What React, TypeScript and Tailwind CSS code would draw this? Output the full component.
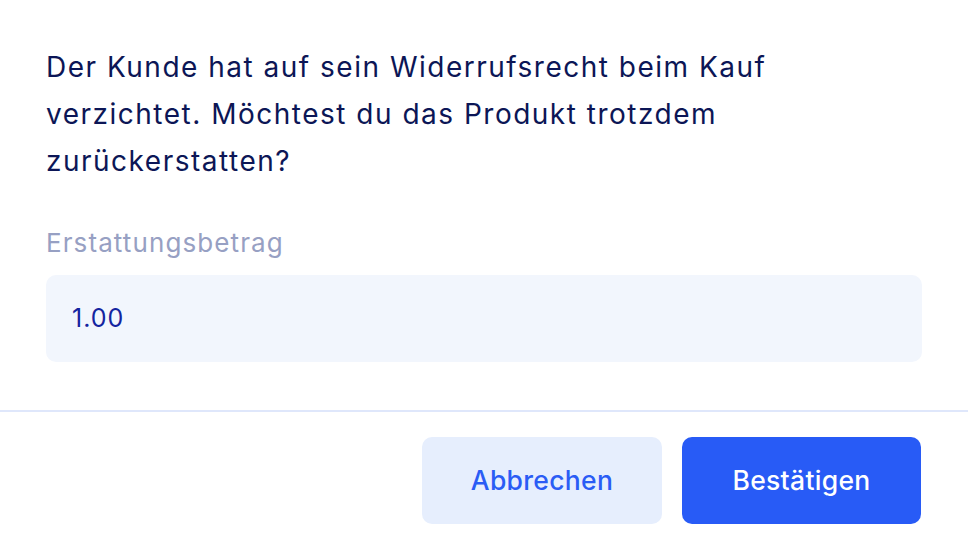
import React from 'react';

export default function App() {
  return (
    <div className="w-[968px] h-[538px] bg-white overflow-hidden" style={{ fontFamily: 'Inter, "Noto Sans", sans-serif' }}>
      {/* Body */}
      <div className="px-[46px] pt-[44px]">
        <p className="text-[28px] leading-[47px] text-[#0c1656] tracking-[1.5px]">
          Der Kunde hat auf sein Widerrufsrecht beim Kauf
          <br />
          verzichtet. Möchtest du das Produkt trotzdem
          <br />
          zurückerstatten?
        </p>

        <label className="block mt-[42px] text-[26px] leading-[32px] text-[#97a0c3] tracking-[1.1px]">Erstattungsbetrag</label>
        <div className="mt-[16px] h-[87px] rounded-[10px] bg-[#f2f6fd] flex items-center px-[26px]">
          <span className="text-[25px] text-[#1424a0] tracking-[1px]">1.00</span>
        </div>
      </div>

      {/* Footer */}
      <div className="mt-[48px] border-t-2 border-[#dfe7fb] flex justify-end gap-[20px] px-[47px] pt-[25px]">
        <button className="w-[240px] h-[87px] rounded-[10px] bg-[#e6eefd] text-[#2a5cf5] text-[26.5px] font-medium tracking-[0.3px]">
          Abbrechen
        </button>
        <button className="w-[239px] h-[87px] rounded-[10px] bg-[#285bf6] text-white text-[26.5px] font-medium tracking-[0.3px]">
          Bestätigen
        </button>
      </div>
    </div>
  );
}
